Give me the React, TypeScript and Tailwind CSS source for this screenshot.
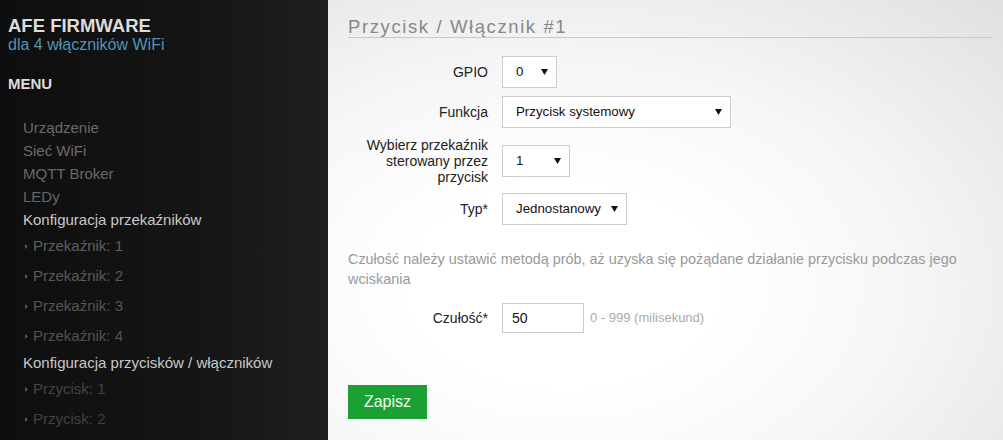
import React from "react";

const font = { fontFamily: '"Liberation Sans", Arial, sans-serif' };

type NavItem = { label: string; sub?: boolean; active?: boolean; color?: string };

const nav: NavItem[] = [
  { label: "Urządzenie", color: "text-[#6b6b6b]" },
  { label: "Sieć WiFi", color: "text-[#6b6b6b]" },
  { label: "MQTT Broker", color: "text-[#686868]" },
  { label: "LEDy", color: "text-[#656565]" },
  { label: "Konfiguracja przekaźników", active: true },
  { label: "Przekaźnik: 1", sub: true, color: "text-[#5f5f5f]" },
  { label: "Przekaźnik: 2", sub: true, color: "text-[#5a5a5a]" },
  { label: "Przekaźnik: 3", sub: true, color: "text-[#555555]" },
  { label: "Przekaźnik: 4", sub: true, color: "text-[#525252]" },
  { label: "Konfiguracja przycisków / włączników", active: true },
  { label: "Przycisk: 1", sub: true, color: "text-[#444444]" },
  { label: "Przycisk: 2", sub: true, color: "text-[#414141]" },
];

const Arrow = () => (
  <svg width="7" height="6" viewBox="0 0 7 6" className="shrink-0">
    <path d="M0 0 H7 L3.5 6 Z" fill="#111" />
  </svg>
);

const Select = ({ value, width }: { value: string; width: string }) => (
  <div
    className={`${width} h-[32px] flex items-center justify-between bg-white border border-[#cccccc] pl-[13px] pr-[8px] text-[13.3px] text-[#111]`}
  >
    <span>{value}</span>
    <Arrow />
  </div>
);

const Row = ({
  label,
  children,
  className = "",
}: {
  label: React.ReactNode;
  children: React.ReactNode;
  className?: string;
}) => (
  <div className={`flex items-center ${className}`}>
    <div className="w-[140px] text-right text-[14px] leading-[16px] text-[#222]">{label}</div>
    <div className="ml-[14px] flex items-center">{children}</div>
  </div>
);

export default function App() {
  return (
    <div style={font} className="flex w-[1003px] h-[440px] overflow-hidden">
      {/* Sidebar */}
      <aside className="w-[328px] shrink-0 h-full bg-[linear-gradient(to_right,#0e0e0e,#151515_60%,#1f1f1f)] pl-[8px] pt-[15px]">
        <div className="text-[18.5px] leading-[21px] font-bold text-[#dcdcdc]">AFE FIRMWARE</div>
        <div className="text-[16px] leading-[17px] text-[#4f95b7]">dla 4 włączników WiFi</div>
        <div className="mt-[22px] text-[15px] leading-[17px] font-bold text-[#dcdcdc]">MENU</div>
        <ul className="mt-[24px] pl-[15px]">
          {nav.map((item) =>
            item.sub ? (
              <li key={item.label} className={`flex items-center h-[30px] text-[15px] ${item.color}`}>
                <svg width="3" height="5" viewBox="0 0 3 5" className="ml-[2px] mr-[5px]">
                  <path d="M0 0 L3 2.5 L0 5 Z" fill="#555" />
                </svg>
                {item.label}
              </li>
            ) : (
              <li
                key={item.label}
                className={`text-[15px] leading-[23px] ${item.active ? "text-[#c8c8c8]" : item.color}`}
              >
                {item.label}
              </li>
            )
          )}
        </ul>
      </aside>

      {/* Main */}
      <main className="flex-1 h-full bg-[radial-gradient(ellipse_at_35%_65%,#ffffff_25%,#f6f6f6_55%,#e0e0e0_100%)] pl-[20px] pr-[11px] pt-[16px]">
        <h1 className="text-[18.5px] leading-[21px] tracking-[1.6px] text-[#888] border-b border-[#c9c9c9]">
          Przycisk / Włącznik #1
        </h1>

        <div className="mt-[18px] flex flex-col gap-[8px]">
          <Row label="GPIO">
            <Select value="0" width="w-[55px]" />
          </Row>
          <Row label="Funkcja">
            <Select value="Przycisk systemowy" width="w-[229px]" />
          </Row>
          <Row
            className="mt-[1px]"
            label={
              <>
                Wybierz przekaźnik
                <br />
                sterowany przez
                <br />
                przycisk
              </>
            }
          >
            <Select value="1" width="w-[68px]" />
          </Row>
          <Row label="Typ*">
            <Select value="Jednostanowy" width="w-[125px]" />
          </Row>
        </div>

        <p className="mt-[24px] text-[14.4px] leading-[20px] text-[#999]">
          Czułość należy ustawić metodą prób, aż uzyska się pożądane działanie przycisku podczas jego wciskania
        </p>

        <div className="mt-[14px]">
          <Row label="Czułość*">
            <div className="w-[82px] h-[30px] flex items-center bg-white border border-[#cccccc] pl-[9px] text-[14px] text-[#111]">
              50
            </div>
            <span className="ml-[6px] text-[13px] text-[#aaa]">0 - 999 (milisekund)</span>
          </Row>
        </div>

        <button className="mt-[52px] h-[34px] w-[79px] bg-[#1ba034] text-[16px] text-[#f4f8ea]">
          Zapisz
        </button>
      </main>
    </div>
  );
}
